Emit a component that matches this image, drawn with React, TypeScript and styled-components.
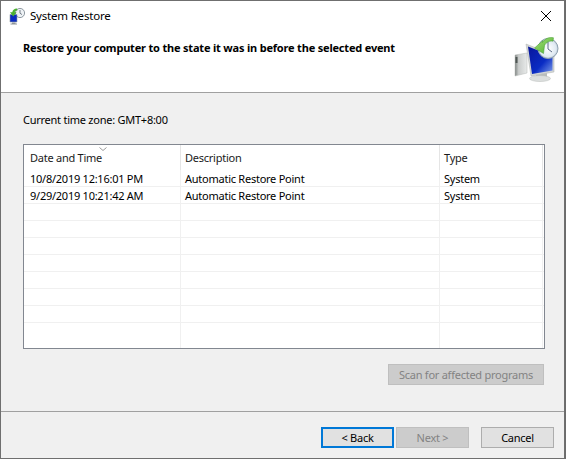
import styled, { createGlobalStyle } from "styled-components";

const GlobalStyle = createGlobalStyle`
  html, body {
    margin: 0;
    padding: 0;
    background: #6b6b6b;
  }
  * {
    box-sizing: border-box;
  }
`;

const Window = styled.div`
  width: 565px;
  height: 459px;
  display: flex;
  flex-direction: column;
  border: 1px solid #6f6f6f;
  background: #f0f0f0;
  color: #000;
  font-family: "Noto Sans", "Open Sans", sans-serif;
  font-size: 11px;
  letter-spacing: -0.25px;
  overflow: hidden;
`;

const Header = styled.div`
  height: 92px;
  flex: none;
  background: #fff;
  border-bottom: 1px solid #a0a0a0;
  display: flex;
  flex-direction: column;
  position: relative;
`;

const TitleBar = styled.div`
  height: 30px;
  display: flex;
  align-items: center;
  padding: 0 12px 0 8px;
  gap: 5px;
`;

const WindowTitle = styled.span`
  flex: 1;
  font-size: 11.5px;
  letter-spacing: -0.2px;
  line-height: 16px;
`;

const CloseButton = styled.button`
  width: 12px;
  height: 12px;
  padding: 0;
  border: none;
  background: none;
  display: flex;
`;

const Heading = styled.h1`
  margin: 9px 0 0 22px;
  font-size: 11px;
  font-weight: 700;
  letter-spacing: -0.19px;
  line-height: 16px;
`;

const HeaderIcon = styled.div`
  position: absolute;
  left: 511px;
  top: 34px;
  display: flex;
`;

const Body = styled.div`
  flex: 1;
  display: flex;
  flex-direction: column;
  padding: 19px 19px 0 22px;
`;

const ZoneLabel = styled.div`
  height: 16px;
  line-height: 16px;
`;

const Table = styled.div`
  margin-top: 16px;
  height: 205px;
  display: flex;
  flex-direction: column;
  background: #fff;
  border: 1px solid #828790;
  overflow: hidden;
  position: relative;
`;

const SortArrow = styled.svg`
  position: absolute;
  left: 75px;
  top: 2px;
`;

const HeaderRow = styled.div`
  height: 25px;
  flex: none;
  display: grid;
  grid-template-columns: 157px 259px 103px;
`;

const HeaderCell = styled.div<{ $pad?: number }>`
  padding: 5px 0 0 ${(p) => p.$pad ?? 4}px;
  line-height: 16px;
  color: #1a1a1a;
  border-right: 1px solid #e5e5e5;
`;

const Row = styled.div<{ $first?: boolean }>`
  height: 17px;
  flex: none;
  display: grid;
  grid-template-columns: 157px 259px 103px;
  margin-top: ${(p) => (p.$first ? "-1px" : "0")};
  border-top: 1px solid ${(p) => (p.$first ? "transparent" : "#f0f0f0")};
`;

const Cell = styled.div<{ $pad?: number }>`
  padding: 1px 0 0 ${(p) => p.$pad ?? 4}px;
  line-height: 15px;
  white-space: nowrap;
  border-right: 1px solid #f0f0f0;
`;

const LastRow = styled(Row)`
  flex: 1;
`;

const ScanRow = styled.div`
  margin-top: 15px;
  padding-right: 1px;
  display: flex;
  justify-content: flex-end;
`;

const Button = styled.button<{ $focused?: boolean; $width: number }>`
  width: ${(p) => p.$width}px;
  height: 21px;
  padding: 0;
  font: inherit;
  letter-spacing: inherit;
  line-height: 15px;
  color: #000;
  background: #e1e1e1;
  border: ${(p) => (p.$focused ? "2px solid #0078d7" : "1px solid #adadad")};

  &:disabled {
    color: #838383;
    background: #cccccc;
    border-color: #bfbfbf;
  }
`;

const Footer = styled.div`
  margin-top: auto;
  height: 47px;
  flex: none;
  border-top: 1px solid #a0a0a0;
  padding: 15px 10px 0 320px;
  display: flex;
  align-items: flex-start;
  gap: 2px;
`;

const CancelSlot = styled.div`
  margin-left: 10px;
`;

const rows = [
  ["10/8/2019 12:16:01 PM", "Automatic Restore Point", "System"],
  ["9/29/2019 10:21:42 AM", "Automatic Restore Point", "System"],
  ["", "", ""],
  ["", "", ""],
  ["", "", ""],
  ["", "", ""],
  ["", "", ""],
  ["", "", ""],
  ["", "", ""],
];

// monitor, tower and clock with the green return arrow, drawn on a 48x48 grid
const RestoreIcon = () => (
  <svg width={48} height={48} viewBox="0 0 48 48">
    <defs>
      <linearGradient id="screen" x1="0" y1="0" x2="1" y2="1">
        <stop offset="0" stopColor="#08159a" />
        <stop offset="0.6" stopColor="#0a2cc4" />
        <stop offset="1" stopColor="#7f9eea" />
      </linearGradient>
      <linearGradient id="tower" x1="0" y1="0" x2="1" y2="0">
        <stop offset="0" stopColor="#7f8583" />
        <stop offset="0.3" stopColor="#c9cccb" />
        <stop offset="1" stopColor="#e8eaea" />
      </linearGradient>
      <linearGradient id="arrow" x1="0" y1="0" x2="1" y2="1">
        <stop offset="0" stopColor="#a8e07a" />
        <stop offset="1" stopColor="#4aae2e" />
      </linearGradient>
      <radialGradient id="clock" cx="0.5" cy="0.5" r="0.55">
        <stop offset="0" stopColor="#ffffff" />
        <stop offset="0.75" stopColor="#dfe9f2" />
        <stop offset="1" stopColor="#9fb0bf" />
      </radialGradient>
    </defs>
    <path d="M3 20 L15 18 V38 L3 41 Z" fill="url(#tower)" stroke="#b4b8b7" strokeWidth="0.5" />
    <rect x="3.5" y="22" width="2" height="6" fill="#4f5654" />
    <path d="M14 9 L42 20 V37 L19 41 Z" fill="#d3d6d5" stroke="#aeb2b1" strokeWidth="0.5" />
    <path d="M16 11.5 L40.5 21 V35.5 L20 39 Z" fill="url(#screen)" />
    <path d="M24 40 L35 38 V42 H24 Z" fill="#b9bdbc" />
    <ellipse cx="28" cy="43.5" rx="10.5" ry="3" fill="#dcdfde" stroke="#b5b8b7" strokeWidth="0.5" />
    <circle cx="36" cy="13.5" r="10" fill="url(#clock)" stroke="#8ea0b0" strokeWidth="1" />
    <path d="M36 7 V14 L40 17" fill="none" stroke="#4a5a78" strokeWidth="0.9" />
    <path
      d="M22.5 13 L31 5.5 L30.5 7.5 C33 3.5 37 1.8 41.5 2.8 L41 6.2 C37.5 5.6 34 7.2 32.5 10.5 L31.5 18.5 Z"
      fill="url(#arrow)"
      stroke="#3f9a2a"
      strokeWidth="0.5"
    />
  </svg>
);

// the title bar version is a different drawing: clock and arrow fill more of it
const SmallRestoreIcon = () => (
  <svg width={16} height={17} viewBox="0 0 16 17">
    <circle cx="11" cy="5" r="4.6" fill="#eef2f5" stroke="#75828c" strokeWidth="0.8" />
    <path d="M11 2 V5.2 L13 6.6" fill="none" stroke="#46525e" strokeWidth="0.7" />
    <path d="M1 6.5 H8 V14 H1 Z" fill="#0b2cc0" stroke="#8f9aa3" strokeWidth="0.6" />
    <path d="M3 14.5 H6.5 V15.5 H8 V16.5 H1.5 V15.5 H3 Z" fill="#8d9499" />
    <path d="M8 0.6 C5 0.6 3.6 2.4 3.3 4.2 L1 4.2 L4.2 8.4 L7.6 4.2 L5.6 4.2 C6 3 7 2.4 8.4 2.4 Z" fill="#49b02f" />
  </svg>
);

export default function App() {
  return (
    <>
      <GlobalStyle />
      <Window>
        <Header>
          <TitleBar>
            <SmallRestoreIcon />
            <WindowTitle>System Restore</WindowTitle>
            <CloseButton aria-label="Close">
              <svg width="12" height="12" viewBox="0 0 12 12">
                <path d="M1 1 L11 11 M11 1 L1 11" stroke="#000" strokeWidth="1" fill="none" />
              </svg>
            </CloseButton>
          </TitleBar>
          <Heading>Restore your computer to the state it was in before the selected event</Heading>
          <HeaderIcon>
            <RestoreIcon />
          </HeaderIcon>
        </Header>
        <Body>
          <ZoneLabel>Current time zone: GMT+8:00</ZoneLabel>
          <Table>
            <SortArrow width="8" height="4" viewBox="0 0 8 4">
              <path d="M0.5 0.5 L4 3.5 L7.5 0.5" stroke="#9a9a9a" fill="none" />
            </SortArrow>
            <HeaderRow>
              <HeaderCell $pad={6}>Date and Time</HeaderCell>
              <HeaderCell>Description</HeaderCell>
              <HeaderCell>Type</HeaderCell>
            </HeaderRow>
            {rows.map((r, i) => (
              <Row key={i} $first={i === 0}>
                <Cell $pad={6}>{r[0]}</Cell>
                <Cell>{r[1]}</Cell>
                <Cell>{r[2]}</Cell>
              </Row>
            ))}
            <LastRow>
              <Cell />
              <Cell />
              <Cell />
            </LastRow>
          </Table>
          <ScanRow>
            <Button $width={156} disabled>
              Scan for affected programs
            </Button>
          </ScanRow>
        </Body>
        <Footer>
          <Button $width={73} $focused>
            &lt; Back
          </Button>
          <Button $width={73} disabled>
            Next &gt;
          </Button>
          <CancelSlot>
            <Button $width={73}>Cancel</Button>
          </CancelSlot>
        </Footer>
      </Window>
    </>
  );
}
